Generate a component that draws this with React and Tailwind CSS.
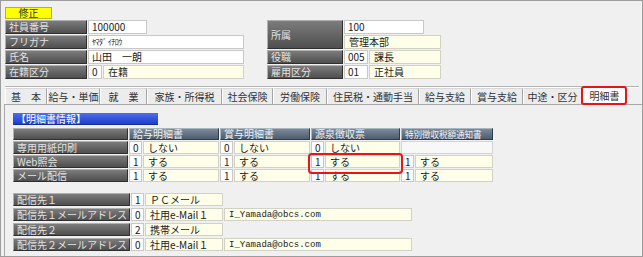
import React from 'react';

const font = "font-['Noto_Sans_CJK_JP','Noto_Sans',sans-serif]";
const label =
  'flex items-center px-[3px] bg-linear-to-b from-[#7c7c7c] to-[#4f4f4f] border border-t-[#b0b0b0] border-l-[#b0b0b0] border-b-[#2f2f2f] border-r-[#2f2f2f] text-[#e2e2e2] whitespace-nowrap';
const head =
  'flex items-center px-[3px] leading-[10px] bg-linear-to-b from-[#7b8b9b] to-[#4d5d6d] border border-t-[#a9b5c1] border-l-[#a9b5c1] border-b-[#2f3b47] border-r-[#2f3b47] text-[#eef2f6] whitespace-nowrap';
const white = 'flex items-center px-[3px] bg-white border border-[#c8c8c8] whitespace-nowrap';
const cream = 'flex items-center px-[4px] bg-[#fefee9] border border-[#d2d2c4] whitespace-nowrap';

const tabs = [
  ['基　本', 42],
  ['給与・単価', 53],
  ['就　業', 47],
  ['家族・所得税', 75],
  ['社会保険', 51],
  ['労働保険', 54],
  ['住民税・通動手当', 92],
  ['給与支給', 52],
  ['賞与支給', 52],
  ['中途・区分', 59],
];

const cols = [
  ['給与明細書', 'w-[90px]', ''],
  ['賞与明細書', 'w-[90px]', ''],
  ['源泉徴収票', 'w-[89px]', ''],
  ['特別徴収税額通知書', 'w-[92px]', 'text-[8.6px] tracking-[-0.1px]'],
];

const rows = [
  ['専用用紙印刷', [['0', 'しない'], ['0', 'しない'], ['0', 'しない'], null]],
  ['Web照会', [['1', 'する'], ['1', 'する'], ['1', 'する'], ['1', 'する']]],
  ['メール配信', [['1', 'する'], ['1', 'する'], ['1', 'する'], ['1', 'する']]],
];

const delivery = [
  ['配信先１', '1', 'ＰＣメール', null],
  ['配信先１メールアドレス', '0', '社用e-Mail１', 'I_Yamada@obcs.com'],
  ['配信先２', '2', '携帯メール', null],
  ['配信先２メールアドレス', '0', '社用e-Mail１', 'I_Yamada@obcs.com'],
];

const ValueCell = ({ code, text, width, highlight }) => (
  <div className={`relative flex gap-px ${width}`}>
    {code !== undefined ? (
      <>
        <div className={`${white} w-[13px] shrink-0`}>{code}</div>
        <div className={`${cream} flex-1`}>{text}</div>
      </>
    ) : (
      <div className="flex-1 bg-[#f8f8f8] border border-[#d4d4d4]" />
    )}
    {highlight && (
      <div className="absolute z-10 -left-[3px] -right-[3px] -top-[2px] -bottom-[6px] border-[2.5px] border-[#e8141c] rounded-[4px]" />
    )}
  </div>
);

export default function App() {
  return (
    <div
      className={`w-[643px] h-[257px] overflow-hidden bg-[#f0f0f0] border border-[#9c9c9c] ${font} text-[10px] leading-[12px] text-[#222] flex flex-col`}
    >
      {/* header info */}
      <div className="pl-[4px] pt-[6px]">
        <div className="w-[47px] h-[12px] flex items-center justify-center bg-[#ffff00] border border-[#b8b800] text-[#333] leading-[10px]">
          修正
        </div>
        <div className="flex mt-px">
          <div className="w-[239px] flex flex-col gap-px">
            <div className="flex gap-px h-[14px]">
              <div className={`${label} w-[82px]`}>社員番号</div>
              <div className={`${white} w-[59px]`}>100000</div>
            </div>
            <div className="flex gap-px h-[14px]">
              <div className={`${label} w-[82px]`}>フリガナ</div>
              <div className={`${white} flex-1 text-[8px] tracking-[-0.5px]`}>ﾔﾏﾀﾞ ｲﾁﾛｳ</div>
            </div>
            <div className="flex gap-px h-[14px]">
              <div className={`${label} w-[82px]`}>氏名</div>
              <div className={`${white} flex-1`}>山田　一朗</div>
            </div>
            <div className="flex gap-px h-[14px]">
              <div className={`${label} w-[82px]`}>在籍区分</div>
              <div className={`${white} w-[14px]`}>0</div>
              <div className={`${cream} flex-1`}>在籍</div>
            </div>
          </div>

          <div className="ml-[23px] grid grid-cols-[76px_24px_72px] grid-rows-[14px_14px_14px_14px] gap-px">
            <div className={`${label} row-span-2`}>所属</div>
            <div className={`${white} col-span-2 mr-[17px]`}>100</div>
            <div className={`${cream} col-span-2`}>管理本部</div>
            <div className={label}>役職</div>
            <div className={white}>005</div>
            <div className={cream}>課長</div>
            <div className={label}>雇用区分</div>
            <div className={white}>01</div>
            <div className={cream}>正社員</div>
          </div>
        </div>
      </div>

      {/* separator */}
      <div className="mt-[7px] ml-[4px] mr-[3px] h-[2px] border-t border-[#b4b4b4] border-b border-b-white" />

      {/* tabs */}
      <div className="flex h-[16px] ml-[4px] text-[#333]">
        {tabs.map(([t, w]) => (
          <div
            key={t}
            style={{ width: w }}
            className="flex items-center justify-center bg-[#ececec] border-l border-l-white border-r border-r-[#a4a4a4] border-t border-t-[#d8d8d8] whitespace-nowrap"
          >
            {t}
          </div>
        ))}
        <div className="relative w-[45px] flex items-center justify-center bg-white -mt-[1px] h-[17px]">
          明細書
          <div className="absolute -left-[1px] right-0 -top-[1px] -bottom-[1px] border-2 border-[#e8141c] rounded-[3px]" />
        </div>
      </div>

      {/* panel */}
      <div className="flex-1 ml-[3px] border-t border-l border-[#a8a8a8] pl-[8px] pt-[8px]">
        <div className="w-[145px] h-[12px] flex items-center px-[3px] leading-[10px] bg-linear-to-b from-[#4e6cf0] to-[#1f3ec8] border-b border-[#162c90] text-white">
          【明細書情報】
        </div>

        <div className="mt-[3px] flex flex-col gap-px">
          <div className="flex gap-px h-[12px]">
            <div className={`${label} w-[115px]`} />
            {cols.map(([c, w, extra]) => (
              <div key={c} className={`${head} ${w} ${extra}`}>
                {c}
              </div>
            ))}
          </div>
          {rows.map(([name, vals], ri) => (
            <div key={name} className="flex gap-px h-[13px]">
              <div className={`${label} w-[115px]`}>{name}</div>
              {vals.map((v, i) =>
                v ? (
                  <ValueCell
                    key={i}
                    code={v[0]}
                    text={v[1]}
                    width={cols[i][1]}
                    highlight={ri === 1 && i === 2}
                  />
                ) : (
                  <ValueCell key={i} width={cols[i][1]} />
                )
              )}
            </div>
          ))}
        </div>

        <div className="mt-[11px] flex flex-col gap-[2px]">
          {delivery.map(([name, code, text, mail], i) => (
            <div key={i} className="flex gap-px h-[13px]">
              <div className={`${label} w-[117px]`}>{name}</div>
              <div className={`${white} w-[13px]`}>{code}</div>
              <div className={`${cream} w-[78px]`}>{text}</div>
              {mail && (
                <div className={`${cream} w-[188px] font-['Liberation_Mono',monospace] text-[9px]`}>
                  {mail}
                </div>
              )}
            </div>
          ))}
        </div>
      </div>
    </div>
  );
}
